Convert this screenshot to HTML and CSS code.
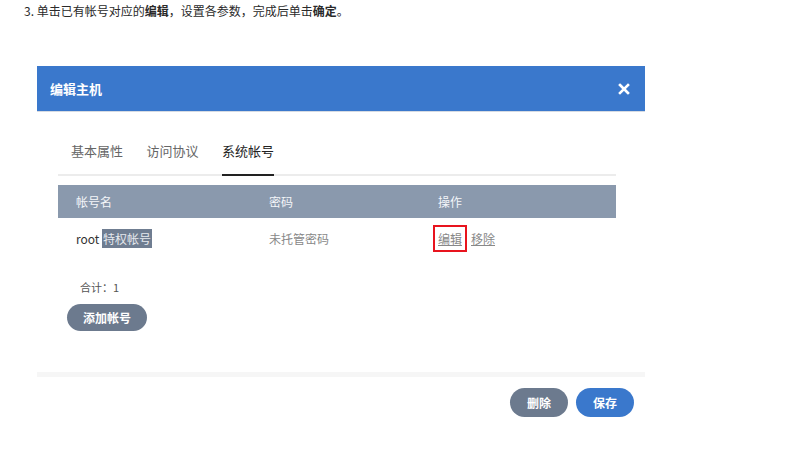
FILE: index.html
```html
<!DOCTYPE html>
<html lang="zh">
<head>
<meta charset="utf-8">
<link rel="stylesheet" href="styles.css">
</head>
<body>
<p class="step">3. 单击已有帐号对应的<b>编辑</b>，设置各参数，完成后单击<b>确定</b>。</p>
<div class="dialog">
  <div class="dlg-head">
    <span class="dlg-title">编辑主机</span>
    <svg class="close" width="12" height="12" viewBox="0 0 12 12"><path d="M2 2L10 10M10 2L2 10" stroke="#fff" stroke-width="2.6" stroke-linecap="square"/></svg>
  </div>
  <div class="dlg-body">
    <div class="tabs">
      <span class="tab">基本属性</span>
      <span class="tab">访问协议</span>
      <span class="tab active">系统帐号</span>
    </div>
    <div class="table">
      <div class="thead">
        <span class="c1">帐号名</span><span class="c2">密码</span><span class="c3">操作</span>
      </div>
      <div class="trow">
        <span class="c1 name">root <span class="sel">特权帐号</span></span>
        <span class="c2 muted">未托管密码</span>
        <span class="c3 ops"><a class="link boxed">编辑</a><a class="link">移除</a></span>
      </div>
    </div>
    <div class="total">合计：1</div>
    <button class="btn gray add">添加帐号</button>
  </div>
  <div class="dlg-foot">
    <button class="btn gray">删除</button>
    <button class="btn blue">保存</button>
  </div>
</div>
</body>
</html>
```
FILE: styles.css
```css
* { box-sizing: border-box; }
body {
  margin: 0;
  background: #fff;
  font-family: "Noto Sans CJK SC", "Liberation Sans", sans-serif;
  color: #333;
}
.step {
  margin: 0;
  padding: 4px 0 0 24px;
  font-size: 12px;
  line-height: 14px;
  color: #2a2a2a;
}
.step b { font-weight: 700; }
.dialog {
  margin: 48px 0 0 37px;
  width: 608px;
  background: #fff;
}
.dlg-head {
  height: 46px;
  background: #3a78cc;
  border-bottom: 1px solid #d6dbe2;
  display: flex;
  align-items: center;
  justify-content: space-between;
  padding: 0 15px 0 13px;
}
.dlg-title {
  color: #fff;
  font-size: 13px;
  font-weight: 700;
}
.close { display: block; }
.dlg-body {
  padding: 0 29px 0 21px;
  height: 260px;
}
.tabs {
  display: flex;
  height: 64px;
  padding-left: 13px;
  border-bottom: 2px solid #ececec;
}
.tab {
  font-size: 13px;
  color: #666;
  padding-top: 29px;
  margin-right: 23.5px;
  height: 64px;
}
.tab.active {
  color: #222;
  border-bottom: 2px solid #222;
  margin-bottom: -2px;
}
.table { margin-top: 9px; }
.thead, .trow {
  display: flex;
  align-items: center;
  font-size: 12px;
}
.thead {
  height: 33px;
  background: #8a99ad;
  color: #f4f6f9;
}
.trow { height: 40px; }
.c1 { width: 211px; padding-left: 18px; }
.c2 { width: 169px; }
.c3 { flex: 1; }
.name { color: #333; }
.sel { background: #6f7d91; color: #e6e9ee; padding: 1px 1px; }
.muted { color: #888; }
.ops { display: flex; gap: 9px; }
.link {
  color: #888;
  text-decoration: underline;
}
.boxed {
  outline: 2px solid #e8141e;
  outline-offset: 3px;
}
.total {
  margin-top: 21px;
  padding-left: 22px;
  font-size: 11px;
  color: #555;
}
.btn {
  border: 0;
  border-radius: 15px;
  color: #fff;
  font-family: inherit;
  font-size: 12px;
  font-weight: 700;
  cursor: pointer;
}
.gray { background: #6c7a8e; }
.blue { background: #3a78cc; }
.add {
  margin: 9px 0 0 9px;
  width: 80px;
  height: 27px;
}
.dlg-foot {
  border-top: 5px solid #f6f6f6;
  display: flex;
  justify-content: flex-end;
  gap: 8px;
  padding: 11px 11px 0 0;
}
.dlg-foot .btn {
  width: 58px;
  height: 29px;
}
```
